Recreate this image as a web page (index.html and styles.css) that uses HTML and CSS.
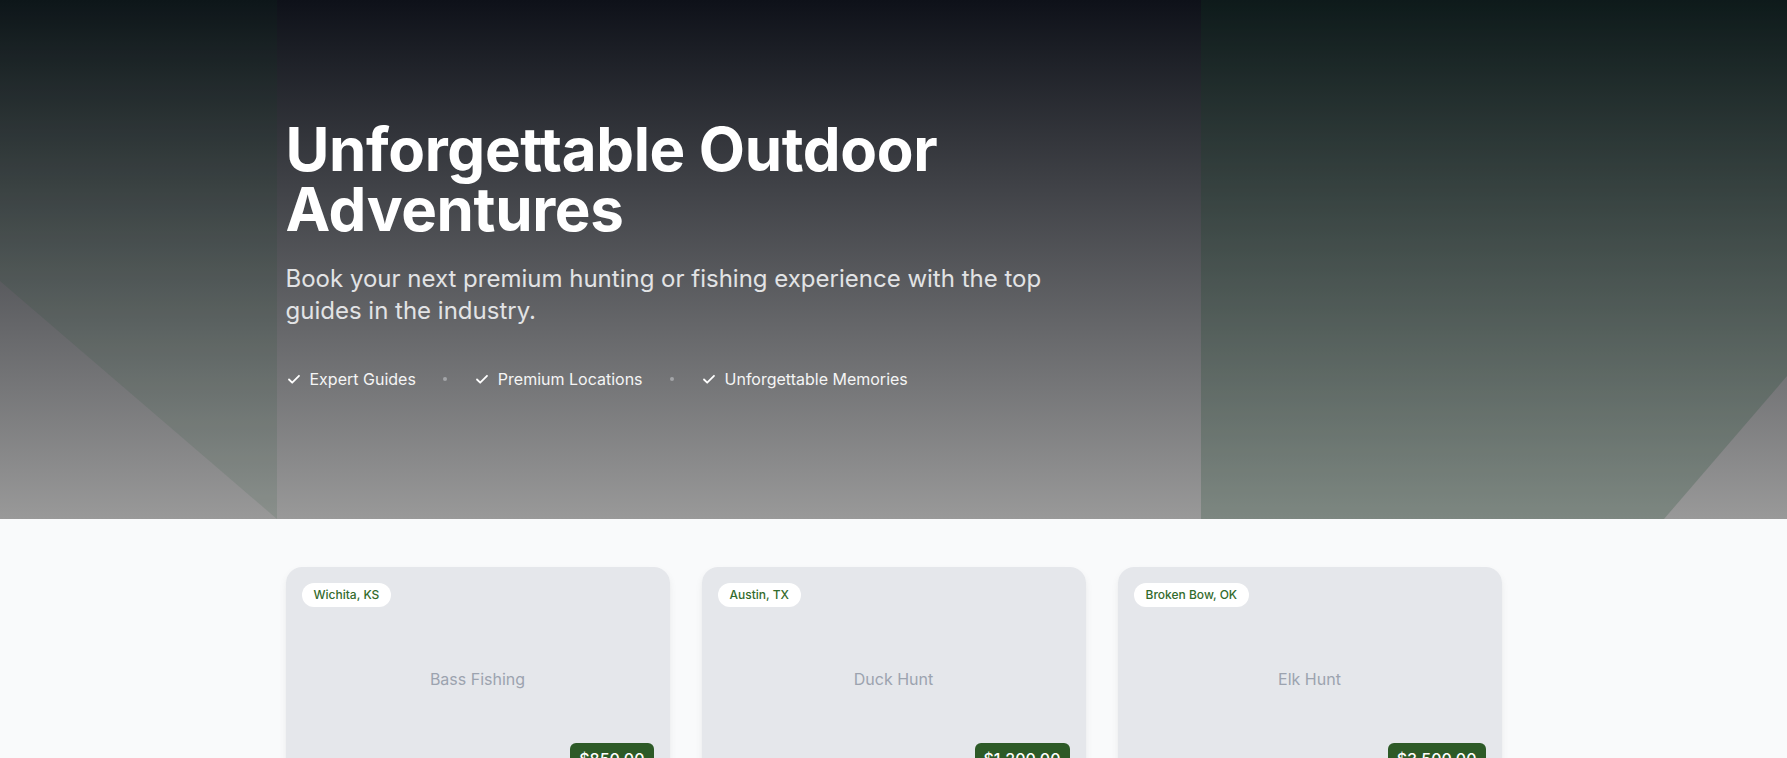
FILE: index.html
```html
<!DOCTYPE html>
<html lang="en">
<head>
<meta charset="utf-8">
<title>Unforgettable Outdoor Adventures</title>
<link rel="stylesheet" href="styles.css">
</head>
<body>
<section class="hero">
  <svg class="hero-shapes" viewBox="0 0 1787 519" preserveAspectRatio="none" aria-hidden="true">
    <polygon class="shape-left" points="0,0 277,0 277,519 0,281" />
    <polygon class="shape-right" points="1201,0 1787,0 1787,376 1664,519 1201,519" />
  </svg>
  <div class="container hero-content">
    <h1 class="hero-title">Unforgettable Outdoor Adventures</h1>
    <p class="hero-subtitle">Book your next premium hunting or fishing experience with the top guides in the industry.</p>
    <ul class="features">
      <li class="feature">
        <svg class="check" viewBox="0 0 16 16"><path d="M3 8.5l3.2 3.2L13 4.8"/></svg>
        <span>Expert Guides</span>
      </li>
      <li class="dot" aria-hidden="true"></li>
      <li class="feature">
        <svg class="check" viewBox="0 0 16 16"><path d="M3 8.5l3.2 3.2L13 4.8"/></svg>
        <span>Premium Locations</span>
      </li>
      <li class="dot" aria-hidden="true"></li>
      <li class="feature">
        <svg class="check" viewBox="0 0 16 16"><path d="M3 8.5l3.2 3.2L13 4.8"/></svg>
        <span>Unforgettable Memories</span>
      </li>
    </ul>
  </div>
</section>

<section class="listings">
  <div class="container grid">
    <article class="card">
      <div class="card-media">
        <span class="location">Wichita, KS</span>
        <span class="media-label">Bass Fishing</span>
        <span class="price">$850.00</span>
      </div>
      <div class="card-body">
        <h3 class="card-title">Bass Fishing</h3>
        <p class="card-text">Full day guided bass fishing trip.</p>
      </div>
    </article>
    <article class="card">
      <div class="card-media">
        <span class="location">Austin, TX</span>
        <span class="media-label">Duck Hunt</span>
        <span class="price">$1,200.00</span>
      </div>
      <div class="card-body">
        <h3 class="card-title">Duck Hunt</h3>
        <p class="card-text">Guided waterfowl hunt with blinds and decoys.</p>
      </div>
    </article>
    <article class="card">
      <div class="card-media">
        <span class="location">Broken Bow, OK</span>
        <span class="media-label">Elk Hunt</span>
        <span class="price">$3,500.00</span>
      </div>
      <div class="card-body">
        <h3 class="card-title">Elk Hunt</h3>
        <p class="card-text">Multi-day backcountry elk hunt.</p>
      </div>
    </article>
  </div>
</section>
</body>
</html>
```

FILE: styles.css
```css
* { box-sizing: border-box; }

html, body {
  margin: 0;
  padding: 0;
}

body {
  font-family: Inter, "Noto Sans", "Liberation Sans", sans-serif;
  background: #f9fafb;
  color: #111827;
}

.container {
  max-width: 1280px;
  margin: 0 auto;
  padding: 0 32px;
}

/* Hero */
.hero {
  position: relative;
  height: 519px;
  background: linear-gradient(180deg, #0e1119 0%, #999999 100%);
  overflow: hidden;
}

.hero-shapes {
  position: absolute;
  inset: 0;
  width: 100%;
  height: 100%;
}

.shape-left {
  fill: rgba(14, 65, 34, 0.1);
}

.shape-right {
  fill: rgba(14, 65, 34, 0.2);
}

.hero-content {
  position: relative;
  padding-top: 119px;
}

.hero-title {
  margin: 0;
  font-size: 60px;
  line-height: 60px;
  font-weight: 700;
  color: #ffffff;
  max-width: 768px;
  letter-spacing: -0.35px;
}

.hero-subtitle {
  margin: 24px 0 0;
  max-width: 768px;
  font-size: 24px;
  line-height: 32px;
  font-weight: 400;
  color: #e2e3e5;
}

.features {
  list-style: none;
  margin: 40px 0 0;
  padding: 0;
  display: flex;
  align-items: center;
  gap: 27px;
  font-size: 16px;
  line-height: 24px;
  color: #f5f5f5;
}

.feature {
  display: flex;
  align-items: center;
  gap: 8px;
}

.check {
  width: 16px;
  height: 16px;
  fill: none;
  stroke: #ffffff;
  stroke-width: 1.8;
  stroke-linecap: round;
  stroke-linejoin: round;
}

.dot {
  width: 4px;
  height: 4px;
  border-radius: 50%;
  background: #a3a5a8;
}

/* Listings */
.listings {
  padding: 48px 0 64px;
}

.grid {
  display: grid;
  grid-template-columns: repeat(3, 1fr);
  gap: 32px;
}

.card {
  background: #ffffff;
  border-radius: 16px;
  overflow: hidden;
  box-shadow: 0 4px 8px -1px rgba(0, 0, 0, 0.08), 0 2px 4px -2px rgba(0, 0, 0, 0.06);
}

.card-media {
  position: relative;
  height: 224px;
  background: #e5e7eb;
  display: flex;
  align-items: center;
  justify-content: center;
}

.media-label {
  font-size: 16px;
  line-height: 24px;
  color: #9ca3af;
}

.location {
  position: absolute;
  top: 16px;
  left: 16px;
  height: 24px;
  padding: 0 12px;
  border-radius: 999px;
  background: #ffffff;
  color: #336b2d;
  font-size: 12px;
  font-weight: 500;
  line-height: 24px;
}

.price {
  position: absolute;
  right: 16px;
  bottom: 16px;
  padding: 4px 9px;
  border-radius: 6px;
  background: #2d5a27;
  color: #ffffff;
  font-size: 16px;
  font-weight: 500;
  line-height: 24px;
}

.card-body {
  padding: 20px 24px 24px;
}

.card-title {
  margin: 0 0 8px;
  font-size: 20px;
  font-weight: 700;
}

.card-text {
  margin: 0;
  color: #4b5563;
  font-size: 14px;
}
```
